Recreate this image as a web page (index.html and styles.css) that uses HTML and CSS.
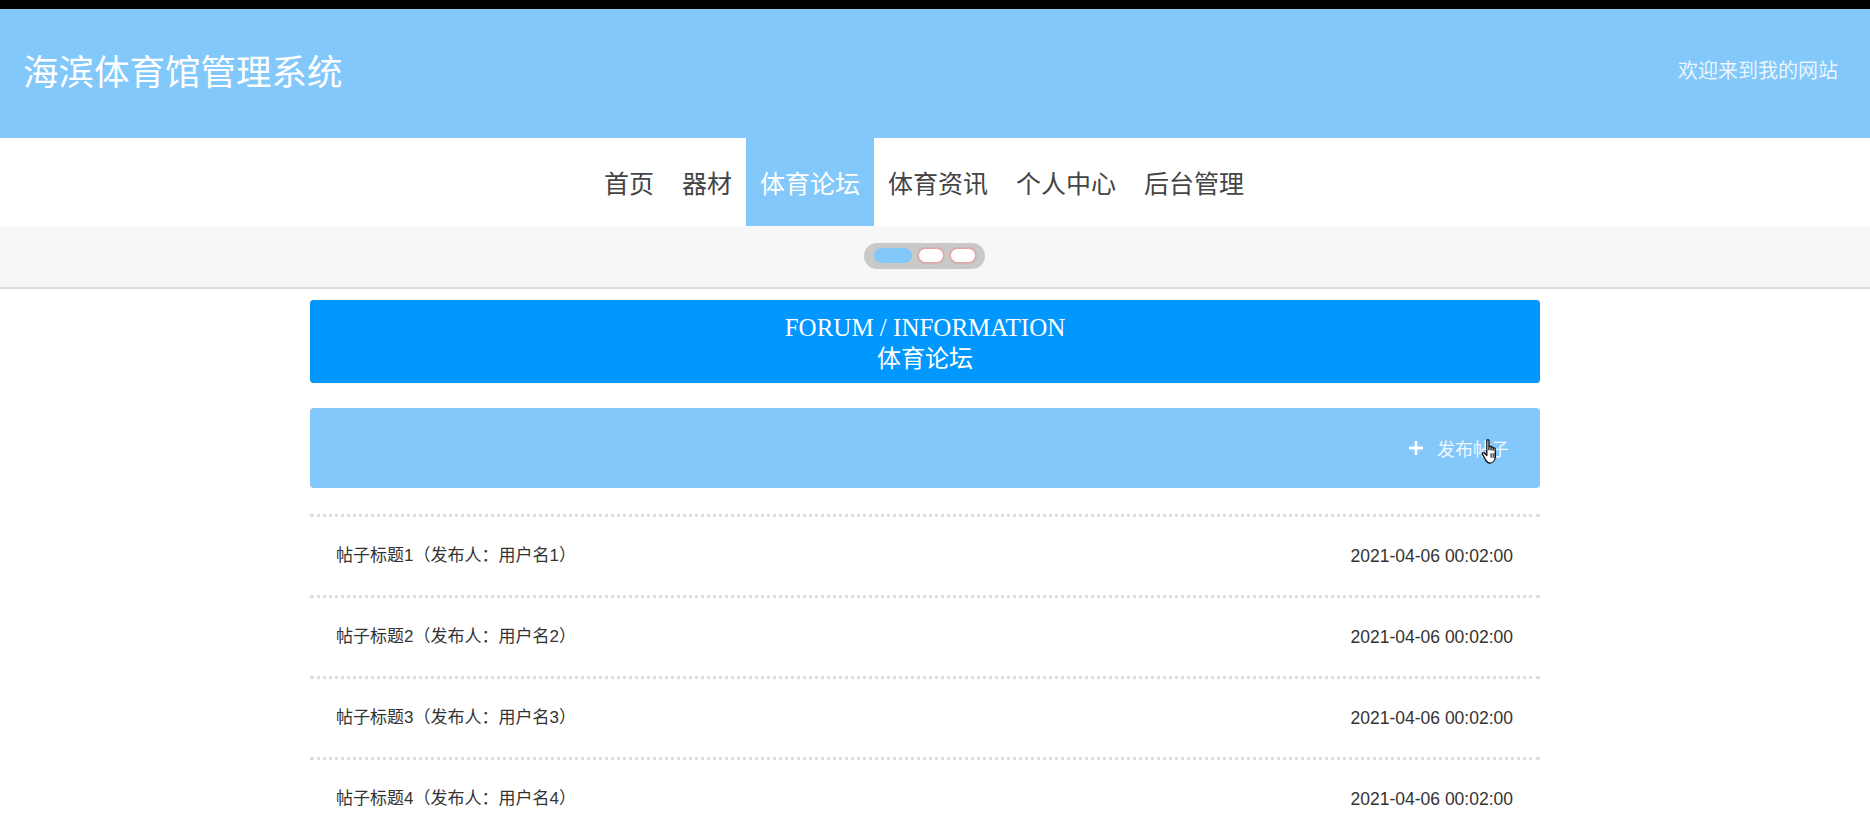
FILE: index.html
```html
<!DOCTYPE html>
<html lang="zh-CN">
<head>
<meta charset="utf-8">
<title>海滨体育馆管理系统</title>
<link rel="stylesheet" href="styles.css">
</head>
<body>
<div class="topbar"></div>
<header class="header">
  <div class="header-inner">
    <div class="site-title">海滨体育馆管理系统</div>
    <div class="welcome">欢迎来到我的网站</div>
  </div>
</header>
<nav class="nav">
  <div class="nav-inner">
    <a class="nav-item">首页</a>
    <a class="nav-item">器材</a>
    <a class="nav-item active">体育论坛</a>
    <a class="nav-item">体育资讯</a>
    <a class="nav-item">个人中心</a>
    <a class="nav-item">后台管理</a>
  </div>
</nav>
<div class="band">
  <div class="band-inner">
    <div class="pager">
      <span class="dot dot-active"></span>
      <span class="dot"></span>
      <span class="dot"></span>
    </div>
  </div>
</div>
<main class="main">
  <div class="container">
    <div class="banner">
      <div class="banner-en">FORUM / INFORMATION</div>
      <div class="banner-cn">体育论坛</div>
    </div>
    <div class="toolbar">
      <a class="publish">
        <svg class="plus" width="16" height="16" viewBox="0 0 16 16"><path d="M8 1v14M1 8h14" stroke="#fff" stroke-width="2.8" fill="none"/></svg>
        <span>发布帖子</span>
      </a>
      <svg class="cursor" width="21" height="28" viewBox="0 0 18 24">
        <path d="M5 2.2c0-1 1.8-1 1.8 0V10l0-2.4c0-1 1.8-1 1.8 0v2.6-1.8c0-1 1.8-1 1.8 0v2.2-1.3c0-1 1.8-1 1.8 0V16c0 3-1.8 5.5-4.8 5.5H8c-2 0-3-1-4-2.6L1.3 14c-.6-1 .6-2 1.5-1.2L5 15V2.2z" fill="#fff" stroke="#111" stroke-width="1.1" stroke-linejoin="round"/>
        <path d="M8.6 13v4M10.4 13v4M12.2 13v4" stroke="#111" stroke-width="0.9"/>
      </svg>
    </div>
    <ul class="list">
      <li class="row"><span class="row-title">帖子标题1（发布人：用户名1）</span><span class="row-date">2021-04-06 00:02:00</span></li>
      <li class="row"><span class="row-title">帖子标题2（发布人：用户名2）</span><span class="row-date">2021-04-06 00:02:00</span></li>
      <li class="row"><span class="row-title">帖子标题3（发布人：用户名3）</span><span class="row-date">2021-04-06 00:02:00</span></li>
      <li class="row"><span class="row-title">帖子标题4（发布人：用户名4）</span><span class="row-date">2021-04-06 00:02:00</span></li>
    </ul>
  </div>
</main>
</body>
</html>
```

FILE: styles.css
```css
* { box-sizing: border-box; }
html, body { margin: 0; padding: 0; }
body {
  font-family: "Noto Sans CJK SC", "Noto Sans", sans-serif;
  background: #fff;
  color: #333;
  overflow: hidden;
}
.topbar { height: 9px; background: #000; }
.header { background: #82c8fb; height: 129px; }
.header-inner {
  margin-right: 20px;
  height: 100%;
  display: flex;
  align-items: center;
  justify-content: space-between;
  padding: 0 12px 8px 23px;
}
.site-title { color: #fff; font-size: 35.5px; line-height: 1; }
.welcome { color: rgba(255,255,255,0.85); font-size: 20px; line-height: 1; }

.nav { background: #fff; height: 88px; }
.nav-inner {
  margin-right: 22px;
  display: flex;
  justify-content: center;
  height: 100%;
}
.nav-item {
  font-size: 25px;
  line-height: 88px;
  padding: 0 14px;
  color: #444;
  text-decoration: none;
}
.nav-item.active { background: #82c8fb; color: #fff; }

.band { background: #f7f7f7; height: 63px; border-bottom: 2px solid #dcdcdc; }
.band-inner {
  margin-right: 21px;
  height: 100%;
  display: flex;
  align-items: center;
  justify-content: center;
  padding-bottom: 2px;
}
.pager {
  display: flex;
  align-items: center;
  gap: 6px;
  height: 26px;
  padding: 0 9px 0 10px;
  border-radius: 13px;
  background: #c9c9c9;
}
.dot {
  width: 26px;
  height: 15px;
  border-radius: 8px;
  background: #fff;
  border: 1px solid #e9a2a0;
  box-shadow: 0 0 2px rgba(230,90,80,0.6);
}
.dot-active {
  width: 38px;
  background: #82c8fb;
  border: none;
  box-shadow: none;
}

.main { margin-right: 20px; padding-top: 11px; }
.container { width: 1230px; margin: 0 auto; }

.banner {
  height: 83px;
  background: #0097ff;
  border-radius: 4px;
  box-shadow: 0 0 1px rgba(190,140,110,0.8);
  color: #fff;
  text-align: center;
  padding-top: 13px;
}
.banner-en { font-family: "Liberation Serif", serif; font-size: 25px; line-height: 29px; }
.banner-cn { font-family: "Noto Sans CJK SC", serif; font-size: 24px; line-height: 29px; }

.toolbar {
  position: relative;
  margin-top: 25px;
  height: 80px;
  background: #82c8fb;
  border-radius: 4px;
  display: flex;
  justify-content: flex-end;
  align-items: center;
  padding: 0 31px 0 0;
}
.publish {
  display: flex;
  align-items: center;
  gap: 13px;
  color: rgba(255,255,255,0.9);
  font-size: 18px;
  line-height: 1;
  text-decoration: none;
}
.plus { display: block; }
.cursor { position: absolute; left: 1171px; top: 30px; }

.list { list-style: none; margin: 26px 0 0; padding: 0; }
.row {
  display: flex;
  justify-content: space-between;
  border-top: 3px dotted #dedede;
  height: 81px;
  line-height: 78px;
  padding: 0 27px 0 26px;
  font-size: 17px;
  color: #333;
}
.row-title { font-family: "Liberation Sans", "Noto Sans CJK SC", sans-serif; }
.row-date { font-family: "Liberation Sans", sans-serif; font-size: 17.5px; }
```
